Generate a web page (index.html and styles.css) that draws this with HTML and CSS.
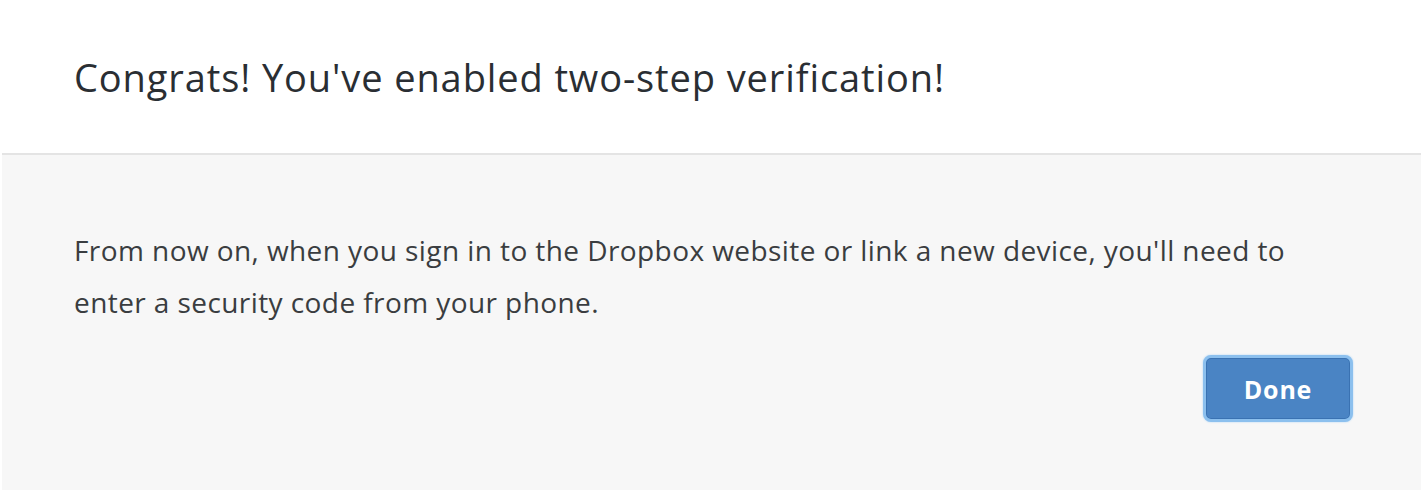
FILE: index.html
```html
<!DOCTYPE html>
<html>
<head>
<meta charset="utf-8">
<link rel="stylesheet" href="styles.css">
</head>
<body>
<div class="dialog">
  <div class="dialog-header">
    <h1 class="title">Congrats! You've enabled two-step verification!</h1>
  </div>
  <div class="dialog-body">
    <p class="message">From now on, when you sign in to the Dropbox website or link a new device, you'll need to enter a security code from your phone.</p>
    <div class="actions">
      <button class="btn-done">Done</button>
    </div>
  </div>
</div>
</body>
</html>
```
FILE: styles.css
```css
html, body {
  margin: 0;
  padding: 0;
  background: #ffffff;
  font-family: "Open Sans", "Noto Sans", sans-serif;
}
.dialog {
  margin: 0 4px 0 2px;
  height: 490px;
  display: flex;
  flex-direction: column;
}
.dialog-header {
  height: 155px;
  border-bottom: 2px solid #e4e4e4;
  padding: 51px 0 0 72px;
  box-sizing: border-box;
  flex: none;
}
.title {
  margin: 0;
  font-weight: 400;
  font-size: 38px;
  line-height: 52px;
  color: #2a2e33;
  letter-spacing: 0.9px;
}
.dialog-body {
  flex: 1;
  background: #f7f7f7;
  padding: 69px 68px 0 72px;
}
.message {
  margin: 0;
  font-size: 28px;
  line-height: 52px;
  color: #3a3d40;
  letter-spacing: 0.42px;
  max-width: 1260px;
}
.actions {
  display: flex;
  justify-content: flex-end;
  margin-top: 27px;
}
.btn-done {
  width: 150px;
  height: 67px;
  border-radius: 8px;
  border: 3px solid #8cc0ee;
  background: #4a84c4;
  color: #ffffff;
  font-family: "Open Sans", "Noto Sans", sans-serif;
  font-weight: 700;
  font-size: 25px;
  letter-spacing: 0.8px;
  box-shadow: inset 0 0 0 1px #3a72b2, 0 0 2px #a9d2f5;
  padding: 0;
}
```
